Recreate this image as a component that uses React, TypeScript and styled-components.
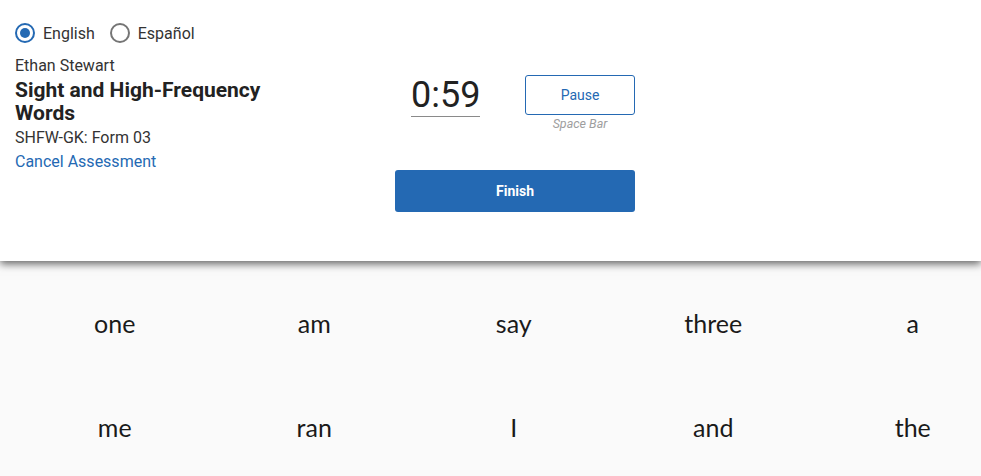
import React, { useState } from 'react';
import styled, { createGlobalStyle } from 'styled-components';

const GlobalStyle = createGlobalStyle`
  html, body {
    margin: 0;
    padding: 0;
    background: #fafafa;
    font-family: Roboto, "Liberation Sans", Arial, sans-serif;
    color: #222;
    overflow: hidden;
  }
`;

const words = [
    ['one', 'am', 'say', 'three', 'a'],
    ['me', 'ran', 'I', 'and', 'the'],
];

const App = () => {
    const [lang, setLang] = useState('en');

    return (
        <>
            <GlobalStyle />
            <Header>
                <InfoColumn>
                    <RadioRow>
                        <RadioLabel onClick={() => setLang('en')}>
                            <RadioCircle checked={lang === 'en'} />
                            English
                        </RadioLabel>
                        <RadioLabel onClick={() => setLang('es')}>
                            <RadioCircle checked={lang === 'es'} />
                            Español
                        </RadioLabel>
                    </RadioRow>
                    <Student>Ethan Stewart</Student>
                    <Title>Sight and High-Frequency Words</Title>
                    <FormName>SHFW-GK: Form 03</FormName>
                    <CancelLink href="#">Cancel Assessment</CancelLink>
                </InfoColumn>

                <Controls>
                    <TimerRow>
                        <Timer>0:59</Timer>
                        <PauseGroup>
                            <PauseButton>Pause</PauseButton>
                            <Hint>Space Bar</Hint>
                        </PauseGroup>
                    </TimerRow>
                    <FinishButton>Finish</FinishButton>
                </Controls>
            </Header>

            <WordArea>
                <WordGrid>
                    {words.flat().map((w, i) => (
                        <Word key={i}>{w}</Word>
                    ))}
                </WordGrid>
            </WordArea>
        </>
    );
};

export default App;

const Header = styled.header`
    position: relative;
    z-index: 1;
    height: 261px;
    box-sizing: border-box;
    background: #fff;
    padding: 22px 15px 0 15px;
    display: flex;
    box-shadow: 0 3px 8px rgba(0, 0, 0, 0.6);
`;

const InfoColumn = styled.div`
    width: 262px;
    display: flex;
    flex-direction: column;
`;

const RadioRow = styled.div`
    display: flex;
    gap: 15px;
    margin-bottom: 12px;
`;

const RadioLabel = styled.label`
    display: flex;
    align-items: center;
    gap: 8px;
    font-size: 16px;
    color: #333;
    cursor: pointer;
    height: 22px;
`;

const RadioCircle = styled.span<{ checked: boolean }>`
    width: 20px;
    height: 20px;
    box-sizing: border-box;
    border-radius: 50%;
    border: 2px solid ${p => (p.checked ? '#2469b3' : '#757575')};
    display: flex;
    align-items: center;
    justify-content: center;

    &::after {
        content: '';
        width: 10px;
        height: 10px;
        border-radius: 50%;
        background: #2469b3;
        display: ${p => (p.checked ? 'block' : 'none')};
    }
`;

const Student = styled.div`
    font-size: 16px;
    line-height: 20px;
    color: #333;
`;

const Title = styled.h1`
    margin: 3px 0 0;
    font-size: 21px;
    line-height: 23px;
    font-weight: 700;
    color: #222;
`;

const FormName = styled.div`
    margin-top: 1px;
    font-size: 16px;
    line-height: 24px;
    color: #333;
`;

const CancelLink = styled.a`
    font-size: 16px;
    line-height: 24px;
    color: #2469b3;
    text-decoration: none;
    align-self: flex-start;
`;

const Controls = styled.div`
    margin-left: 118px;
    width: 240px;
    display: flex;
    flex-direction: column;
    padding-top: 53px;
`;

const TimerRow = styled.div`
    display: flex;
    align-items: flex-start;
    padding-left: 16px;
`;

const Timer = styled.div`
    width: 69px;
    font-size: 36px;
    line-height: 41px;
    font-weight: 400;
    color: #222;
    border-bottom: 1px solid #8a8a8a;
    text-align: center;
`;

const PauseGroup = styled.div`
    margin-left: auto;
    display: flex;
    flex-direction: column;
    align-items: center;
`;

const PauseButton = styled.button`
    width: 110px;
    height: 40px;
    box-sizing: border-box;
    background: #fff;
    border: 1px solid #2469b3;
    border-radius: 3px;
    color: #2469b3;
    font-family: Roboto, "Liberation Sans", Arial, sans-serif;
    font-size: 14px;
    cursor: pointer;
`;

const Hint = styled.span`
    margin-top: 1px;
    font-size: 12.5px;
    line-height: 16px;
    font-style: italic;
    color: #9e9e9e;
`;

const FinishButton = styled.button`
    margin-top: 38px;
    width: 240px;
    height: 42px;
    border: none;
    border-radius: 3px;
    background: #2469b3;
    color: #fff;
    font-family: Roboto, "Liberation Sans", Arial, sans-serif;
    font-size: 14px;
    font-weight: 700;
    cursor: pointer;
`;

const WordArea = styled.main`
    width: 100%;
    overflow: hidden;
`;

const WordGrid = styled.div`
    display: grid;
    grid-template-columns: repeat(5, 199.5px);
    grid-auto-rows: 104px;
    padding: 10px 0 0 15px;
`;

const Word = styled.div`
    display: flex;
    align-items: center;
    justify-content: center;
    font-family: Lato, "Open Sans", sans-serif;
    font-size: 25px;
    color: #1a1a1a;
`;
